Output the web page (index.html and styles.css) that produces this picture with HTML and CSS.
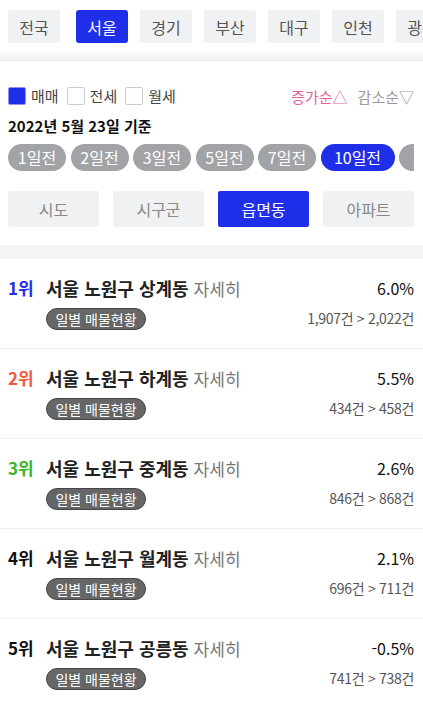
FILE: index.html
```html
<!DOCTYPE html>
<html lang="ko">
<head>
  <meta charset="UTF-8" />
  <title>매물 증감 순위</title>
  <link rel="stylesheet" href="styles.css">
</head>
<body>

  <!-- 지역 탭 -->
  <div class="header">
    <div class="region-tabs">
      <button class="tab">전국</button>
      <button class="tab active">서울</button>
      <button class="tab">경기</button>
      <button class="tab">부산</button>
      <button class="tab">대구</button>
      <button class="tab">인천</button>
      <button class="tab">광주</button>
    </div>
  </div>
  <div class="shade"></div>

  <!-- 필터 -->
  <div class="filters">
    <div class="check-row">
      <div class="checks">
        <label class="check"><span class="box on"></span>매매</label>
        <label class="check"><span class="box"></span>전세</label>
        <label class="check"><span class="box"></span>월세</label>
      </div>
      <div class="sort">
        <span class="sort-up">증가순△</span>
        <span class="sort-down">감소순▽</span>
      </div>
    </div>

    <div class="date">2022년 5월 23일 기준</div>

    <div class="pills">
      <span class="pill">1일전</span>
      <span class="pill">2일전</span>
      <span class="pill">3일전</span>
      <span class="pill">5일전</span>
      <span class="pill">7일전</span>
      <span class="pill wide active">10일전</span>
      <span class="pill wide">15일전</span>
    </div>

    <div class="levels">
      <button class="level">시도</button>
      <button class="level">시구군</button>
      <button class="level active">읍면동</button>
      <button class="level">아파트</button>
    </div>
  </div>

  <div class="gap"></div>

  <!-- 순위 목록 -->
  <ul class="rank-list">
    <li class="row">
      <div class="rank first">1위</div>
      <div class="info">
        <div class="title"><b>서울 노원구 상계동</b> <span class="more">자세히</span></div>
        <span class="badge">일별 매물현황</span>
      </div>
      <div class="nums">
        <div class="pct">6.0%</div>
        <div class="count">1,907건 &gt; 2,022건</div>
      </div>
    </li>
    <li class="row">
      <div class="rank second">2위</div>
      <div class="info">
        <div class="title"><b>서울 노원구 하계동</b> <span class="more">자세히</span></div>
        <span class="badge">일별 매물현황</span>
      </div>
      <div class="nums">
        <div class="pct">5.5%</div>
        <div class="count">434건 &gt; 458건</div>
      </div>
    </li>
    <li class="row">
      <div class="rank third">3위</div>
      <div class="info">
        <div class="title"><b>서울 노원구 중계동</b> <span class="more">자세히</span></div>
        <span class="badge">일별 매물현황</span>
      </div>
      <div class="nums">
        <div class="pct">2.6%</div>
        <div class="count">846건 &gt; 868건</div>
      </div>
    </li>
    <li class="row">
      <div class="rank">4위</div>
      <div class="info">
        <div class="title"><b>서울 노원구 월계동</b> <span class="more">자세히</span></div>
        <span class="badge">일별 매물현황</span>
      </div>
      <div class="nums">
        <div class="pct">2.1%</div>
        <div class="count">696건 &gt; 711건</div>
      </div>
    </li>
    <li class="row">
      <div class="rank">5위</div>
      <div class="info">
        <div class="title"><b>서울 노원구 공릉동</b> <span class="more">자세히</span></div>
        <span class="badge">일별 매물현황</span>
      </div>
      <div class="nums">
        <div class="pct">-0.5%</div>
        <div class="count">741건 &gt; 738건</div>
      </div>
    </li>
  </ul>

</body>
</html>
```

FILE: styles.css
```css
    body {
      margin: 0;
      font-family: "Noto Sans CJK KR", "Noto Sans", sans-serif;
      background: #fff;
      color: #111;
      overflow: hidden;
    }

    button {
      font-family: inherit;
      border: none;
      cursor: pointer;
    }

    /* 지역 탭 */
    .header {
      padding: 10px 0 7px 8px;
      overflow: hidden;
    }

    .region-tabs {
      display: flex;
      gap: 12px;
      white-space: nowrap;
    }

    .tab {
      flex: 0 0 52px;
      height: 33px;
      padding: 0;
      border-radius: 3px;
      background: #f0f1f3;
      color: #555;
      font-size: 16px;
    }

    .tab:first-child {
      margin-right: 4px;
    }

    .tab.active {
      background: #1f2ee9;
      color: #fff;
    }

    .shade {
      height: 10px;
      background: linear-gradient(#fff, #f1f1f1);
      border-bottom: 1px solid #e6e6e6;
    }

    /* 필터 */
    .filters {
      padding: 25px 9px 0 8px;
    }

    .check-row {
      display: flex;
      justify-content: space-between;
      align-items: center;
      height: 20px;
    }

    .checks {
      display: flex;
      gap: 8px;
    }

    .check {
      display: flex;
      align-items: center;
      gap: 5px;
      font-size: 15px;
      color: #444;
      line-height: 20px;
    }

    .box {
      width: 16px;
      height: 16px;
      border: 1px solid #c9ccd3;
      border-radius: 2px;
      background: #fff;
    }

    .box.on {
      background: #1f2ee9;
      border-color: #8b92f4;
    }

    .sort {
      display: flex;
      gap: 10px;
      font-size: 15px;
    }

    .sort-up {
      color: #e4609b;
    }

    .sort-down {
      color: #999;
    }

    .date {
      margin-top: 9px;
      font-size: 15px;
      font-weight: 700;
      line-height: 22px;
      color: #111;
    }

    .pills {
      display: flex;
      gap: 4.5px;
      margin-top: 7px;
      overflow: hidden;
      white-space: nowrap;
    }

    .pill {
      flex: 0 0 58px;
      height: 27px;
      line-height: 27px;
      border-radius: 14px;
      background: #a2a3a7;
      color: #fff;
      font-size: 16px;
      text-align: center;
    }

    .pill.wide {
      flex-basis: 74px;
    }

    .pill.active {
      background: #1f2ee9;
    }

    .levels {
      display: grid;
      grid-template-columns: repeat(4, 1fr);
      gap: 14px;
      margin-top: 20px;
    }

    .level {
      height: 36px;
      border-radius: 2px;
      background: #f0f1f3;
      color: #888;
      font-size: 16px;
    }

    .level.active {
      background: #1f2ee9;
      color: #fff;
    }

    .gap {
      margin-top: 18px;
      height: 14px;
      background: #f4f4f5;
    }

    /* 순위 목록 */
    .rank-list {
      list-style: none;
      margin: 0;
      padding: 0;
    }

    .row {
      display: flex;
      height: 90px;
      padding: 18px 9px 0 8px;
      box-sizing: border-box;
      border-bottom: 1px solid #eee;
    }

    .rank {
      width: 38px;
      font-size: 17px;
      font-weight: 700;
      line-height: 22px;
    }

    .rank.first {
      color: #1f2ee9;
    }

    .rank.second {
      color: #f05a3c;
    }

    .rank.third {
      color: #3bb522;
    }

    .info {
      flex: 1;
      display: flex;
      flex-direction: column;
      align-items: flex-start;
      gap: 8px;
    }

    .title {
      font-size: 18px;
      line-height: 22px;
      color: #222;
      white-space: nowrap;
    }

    .more {
      font-size: 17px;
      color: #777;
    }

    .badge {
      width: 98px;
      height: 20px;
      line-height: 20px;
      border: 1px solid #444;
      border-radius: 11px;
      background: #666;
      color: #fff;
      font-size: 14px;
      text-align: center;
    }

    .nums {
      display: flex;
      flex-direction: column;
      align-items: flex-end;
      gap: 8px;
    }

    .pct {
      font-size: 16px;
      line-height: 22px;
      color: #111;
    }

    .count {
      font-size: 14px;
      line-height: 22px;
      color: #555;
      letter-spacing: -0.3px;
    }
```
